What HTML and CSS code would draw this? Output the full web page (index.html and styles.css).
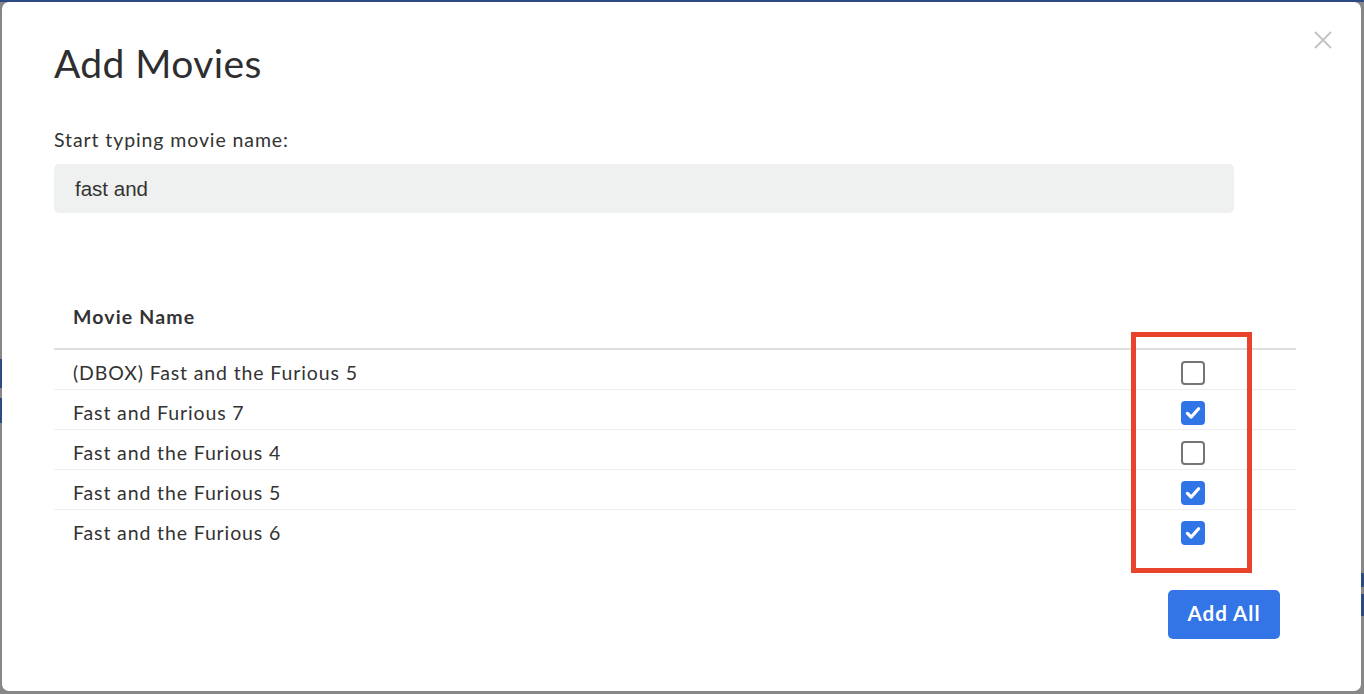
FILE: index.html
```html
<!DOCTYPE html>
<html lang="en">
<head>
<meta charset="utf-8">
<title>Add Movies</title>
<link rel="stylesheet" href="styles.css">
</head>
<body>
<div class="backdrop">
  <div class="modal">
    <button class="close" aria-label="Close">
      <svg width="18" height="18" viewBox="0 0 18 18"><path d="M1 1 L17 17 M17 1 L1 17" stroke="#c2c2c2" stroke-width="1.8" fill="none"/></svg>
    </button>
    <h1 class="title">Add Movies</h1>
    <label class="label" for="q">Start typing movie name:</label>
    <div class="input" id="q">fast and</div>

    <div class="table">
      <div class="thead">Movie Name</div>
      <div class="row"><span class="name">(DBOX) Fast and the Furious 5</span><span class="cell"><span class="cb"></span></span></div>
      <div class="row"><span class="name">Fast and Furious 7</span><span class="cell"><span class="cb on"><svg viewBox="0 0 20 20"><path d="M4.4 10.4 L8.2 14 L15.6 5.7" stroke="#fff" stroke-width="3.2" fill="none" stroke-linecap="round" stroke-linejoin="round"/></svg></span></span></div>
      <div class="row"><span class="name">Fast and the Furious 4</span><span class="cell"><span class="cb"></span></span></div>
      <div class="row"><span class="name">Fast and the Furious 5</span><span class="cell"><span class="cb on"><svg viewBox="0 0 20 20"><path d="M4.4 10.4 L8.2 14 L15.6 5.7" stroke="#fff" stroke-width="3.2" fill="none" stroke-linecap="round" stroke-linejoin="round"/></svg></span></span></div>
      <div class="row last"><span class="name">Fast and the Furious 6</span><span class="cell"><span class="cb on"><svg viewBox="0 0 20 20"><path d="M4.4 10.4 L8.2 14 L15.6 5.7" stroke="#fff" stroke-width="3.2" fill="none" stroke-linecap="round" stroke-linejoin="round"/></svg></span></span></div>
    </div>

    <div class="footer">
      <button class="btn">Add All</button>
    </div>

    <div class="highlight"></div>
  </div>
</div>
</body>
</html>
```

FILE: styles.css
```css
* { box-sizing: border-box; }
html, body { margin: 0; padding: 0; }
body {
  width: 1364px;
  height: 694px;
  overflow: hidden;
  font-family: Lato, "Noto Sans", sans-serif;
  color: #333;
}
.backdrop {
  width: 1364px;
  height: 694px;
  padding: 2px 3px 3px 2px;
  background:
    linear-gradient(#2e4a82, #2e4a82) 0 359px / 2px 29px no-repeat,
    linear-gradient(#2e4a82, #2e4a82) 0 398px / 2px 25px no-repeat,
    linear-gradient(#2e4a82, #2e4a82) 1361px 573px / 3px 14px no-repeat,
    linear-gradient(#2e4a82, #2e4a82) 1361px 594px / 3px 22px no-repeat,
    linear-gradient(#2e4a82 0 2px, #878787 2px);
}
.modal {
  position: relative;
  height: 689px;
  background: #fff;
  border-radius: 7px;
  padding: 38px 65px 0 52px;
}
.close {
  position: absolute;
  top: 28px;
  right: 28px;
  width: 20px;
  height: 20px;
  padding: 1px;
  border: 0;
  background: none;
  display: flex;
  align-items: center;
  justify-content: center;
}
.title {
  margin: 0;
  font-size: 39px;
  line-height: 46px;
  font-weight: 400;
  letter-spacing: 0.4px;
  color: #2e2e2e;
}
.label {
  display: block;
  margin-top: 42px;
  font-size: 19.5px;
  line-height: 24px;
  letter-spacing: 0.9px;
  color: #333;
}
.input {
  margin-top: 12px;
  width: 1180px;
  height: 49px;
  padding-left: 21px;
  display: flex;
  align-items: center;
  background: #eff1f0;
  border-radius: 5px;
  font-family: "Liberation Sans", Arial, sans-serif;
  font-size: 20.5px;
  color: #333;
}
.table {
  margin-top: 72px;
}
.thead {
  padding: 20px 19px 19px;
  font-size: 19.5px;
  line-height: 24px;
  font-weight: 700;
  letter-spacing: 1.15px;
  color: #333;
  border-bottom: 2px solid #dedede;
}
.row {
  display: grid;
  grid-template-columns: 1fr 206px;
  align-items: center;
  height: 40px;
  padding: 6px 0 0 19px;
  border-bottom: 1px solid #eeeeee;
  font-size: 19.5px;
  line-height: 24px;
  letter-spacing: 0.87px;
}
.row.last { border-bottom-color: transparent; }
.cell {
  display: flex;
  justify-content: center;
}
.cb {
  width: 24px;
  height: 24px;
  border: 2px solid #757575;
  border-radius: 4px;
  display: block;
}
.cb.on {
  background: #3174e6;
  border-color: #3174e6;
}
.cb.on svg {
  display: block;
  width: 20px;
  height: 20px;
}
.footer {
  display: flex;
  justify-content: flex-end;
  padding-right: 16px;
  margin-top: 40px;
}
.btn {
  width: 112px;
  height: 49px;
  border: 0;
  border-radius: 5px;
  background: #3374e6;
  color: #fff;
  font-family: Lato, "Noto Sans", sans-serif;
  font-weight: 700;
  font-size: 20.5px;
  letter-spacing: 1px;
  padding: 0 0 4px;
}
.highlight {
  position: absolute;
  left: 1129px;
  top: 330px;
  width: 121px;
  height: 241px;
  border: 5px solid #e8432c;
  pointer-events: none;
}
```
